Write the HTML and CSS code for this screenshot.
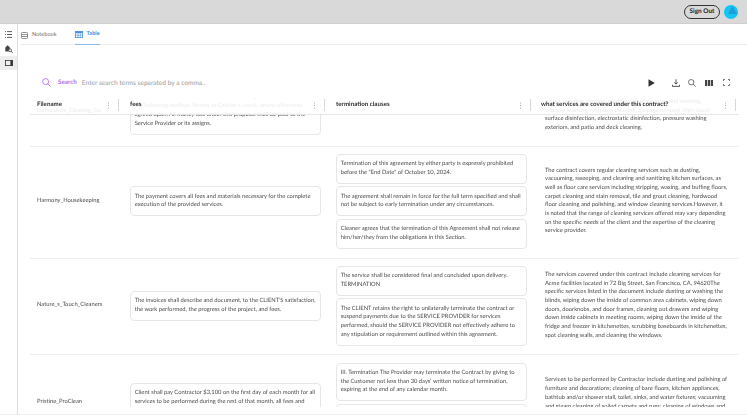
FILE: index.html
```html
<!DOCTYPE html>
<html lang="en">
<head>
    <meta charset="UTF-8">
    <title>Table</title>
    <link rel="stylesheet" href="styles.css">
</head>
<body>
    <header class="topbar">
        <button class="signout">Sign Out</button>
        <svg class="avatar" width="14" height="14" viewBox="0 0 14 14">
            <circle cx="7" cy="7" r="7" fill="#14c4f5"/>
            <path d="M8 1 L13.5 9 H4 Z" fill="#1a9fd6"/>
        </svg>
    </header>

    <div class="main">
        <aside class="sidebar">
            <a class="side-btn">
                <svg width="7" height="7" viewBox="0 0 7 7" fill="none" stroke="#333" stroke-width="0.8">
                    <path d="M2 0.6 H7 M2 3.5 H7 M2 6.4 H7"/>
                    <path d="M0 0.6 H1 M0 3.5 H1 M0 6.4 H1"/>
                </svg>
            </a>
            <a class="side-btn">
                <svg width="8" height="8" viewBox="0 0 8 8">
                    <path d="M0.3 2.5 L2.6 0.3 L4.9 2.5 V6.5 H0.3 Z" fill="#444"/>
                    <circle cx="5.1" cy="5.2" r="1.4" fill="#fff" stroke="#444" stroke-width="0.8"/>
                    <path d="M6.1 6.3 L7.7 7.8" stroke="#444" stroke-width="0.9"/>
                </svg>
            </a>
            <a class="side-btn active">
                <svg width="8" height="6" viewBox="0 0 8 6">
                    <rect x="0.4" y="0.4" width="7.2" height="5.2" fill="none" stroke="#333" stroke-width="0.8"/>
                    <rect x="5.4" y="0.4" width="2.2" height="5.2" fill="#333"/>
                </svg>
            </a>
        </aside>

        <div class="content">
            <nav class="tabs">
                <a class="tab">
                    <svg width="7" height="7" viewBox="0 0 7 7" fill="none" stroke="#777" stroke-width="0.8">
                        <rect x="0.5" y="0.5" width="6" height="6" rx="0.8"/>
                        <path d="M0.5 2.6 H6.5 M0.5 4.5 H6.5"/>
                    </svg>
                    Notebook
                </a>
                <a class="tab active">
                    <svg width="8" height="7" viewBox="0 0 8 7">
                        <rect x="0.4" y="0.4" width="7.2" height="6.2" fill="none" stroke="#4a8ee8" stroke-width="0.8"/>
                        <rect x="0.4" y="0.4" width="7.2" height="1.8" fill="#4a8ee8"/>
                        <path d="M3 2 V6.6 M5.3 2 V6.6 M0.4 4.3 H7.6" stroke="#4a8ee8" stroke-width="0.6"/>
                    </svg>
                    Table
                </a>
            </nav>

            <div class="search-row">
                <svg class="search-icon" width="9" height="9" viewBox="0 0 9 9" fill="none" stroke="#b26ee8" stroke-width="0.9">
                    <circle cx="3.6" cy="3.6" r="3"/>
                    <path d="M5.8 5.8 L8.6 8.6"/>
                </svg>
                <span class="search-label">Search</span>
                <span class="search-hint">Enter search terms separated by a comma..</span>
                <div class="tools">
                    <svg class="tool-play" width="7" height="8" viewBox="0 0 7 8"><path d="M0.5 0.3 L6.8 4 L0.5 7.7 Z" fill="#333"/></svg>
                    <svg class="tool-dl" width="8" height="8" viewBox="0 0 8 8" fill="none" stroke="#444" stroke-width="0.9">
                        <path d="M4 0.3 V5 M2.4 3.4 L4 5.2 L5.6 3.4"/>
                        <path d="M0.5 5.8 V7.4 H7.5 V5.8"/>
                    </svg>
                    <svg class="tool-find" width="8" height="8" viewBox="0 0 8 8" fill="none" stroke="#555" stroke-width="0.8">
                        <circle cx="3.2" cy="3.2" r="2.7"/>
                        <path d="M5.1 5.1 L7.7 7.7"/>
                    </svg>
                    <svg class="tool-cols" width="8" height="6" viewBox="0 0 8 6">
                        <path d="M0 0 H2.2 V6 H0 Z M2.9 0 H5.1 V6 H2.9 Z M5.8 0 H8 V6 H5.8 Z" fill="#444"/>
                    </svg>
                    <svg class="tool-full" width="7" height="7" viewBox="0 0 7 7" fill="none" stroke="#444" stroke-width="0.8">
                        <path d="M0.4 2 V0.4 H2 M5 0.4 H6.6 V2 M6.6 5 V6.6 H5 M2 6.6 H0.4 V5"/>
                    </svg>
                </div>
            </div>

            <div class="table">
                <div class="thead">
                    <div class="th th-name"><span>Filename</span><i class="dots"></i></div>
                    <div class="th"><span>fees</span><i class="dots"></i></div>
                    <div class="th"><span>termination clauses</span><i class="dots"></i></div>
                    <div class="th th-what"><span>what services are covered under this contract?</span><i class="dots"></i></div>
                </div>

                <div class="tbody">
                    <div class="row row-first">
                        <div class="cell cell-name">Immaculate_Cleaning_Co</div>
                        <div class="cell cell-fees">
                            <div class="card">Base rate: $1,300 Overtime rate: $50 / hour Payments are to be made in the following method: Venmo or Cashier's check, unless otherwise agreed upon. All money due under this proposal shall be paid to the Service Provider or its assigns.</div>
                        </div>
                        <div class="cell"></div>
                        <div class="cell cell-what">The contract covers general cleaning of all rooms and common areas, carpet cleaning, dusting, mopping, floor cleaning and washing,<br>window washing, restroom cleaning, garbage removal, high-touch<br>surface disinfection, electrostatic disinfection, pressure washing<br>exteriors, and patio and deck cleaning.</div>
                    </div>

                    <div class="row">
                        <div class="cell cell-name">Harmony_Housekeeping</div>
                        <div class="cell cell-fees">
                            <div class="card">The payment covers all fees and materials necessary for the complete execution of the provided services.</div>
                        </div>
                        <div class="cell">
                            <div class="card">Termination of this agreement by either party is expressly prohibited before the "End Date" of October 10, 2024.</div>
                            <div class="card">The agreement shall remain in force for the full term specified and shall not be subject to early termination under any circumstances.</div>
                            <div class="card">Cleaner agrees that the termination of this Agreement shall not release him/her/they from the obligations in this Section.</div>
                        </div>
                        <div class="cell cell-what">The contract covers regular cleaning services such as dusting, vacuuming, sweeping, and cleaning and sanitizing kitchen surfaces, as well as floor care services including stripping, waxing, and buffing floors, carpet cleaning and stain removal, tile and grout cleaning, hardwood<br>floor cleaning and polishing, and window cleaning services.However, it<br>is noted that the range of cleaning services offered may vary depending<br>on the specific needs of the client and the expertise of the cleaning<br>service provider.</div>
                    </div>

                    <div class="row">
                        <div class="cell cell-name">Nature_s_Touch_Cleaners</div>
                        <div class="cell cell-fees">
                            <div class="card">The invoices shall describe and document, to the CLIENT'S satisfaction, the work performed, the progress of the project, and fees.</div>
                        </div>
                        <div class="cell">
                            <div class="card">The service shall be considered final and concluded upon delivery. TERMINATION</div>
                            <div class="card">The CLIENT retains the right to unilaterally terminate the contract or suspend payments due to the SERVICE PROVIDER for services performed, should the SERVICE PROVIDER not effectively adhere to any stipulation or requirement outlined within this agreement.</div>
                        </div>
                        <div class="cell cell-what">The services covered under this contract include cleaning services for Acme facilities located in 72 Big Street, San Francisco, CA, 94620The specific services listed in the document include dusting or washing the blinds, wiping down the inside of common area cabinets, wiping down doors, doorknobs, and door frames, cleaning out drawers and wiping down inside cabinets in meeting rooms, wiping down the inside of the fridge and freezer in kitchenettes, scrubbing baseboards in kitchenettes, spot cleaning walls, and cleaning the windows.</div>
                    </div>

                    <div class="row">
                        <div class="cell cell-name">Pristine_ProClean</div>
                        <div class="cell cell-fees">
                            <div class="card">Client shall pay Contractor $3,100 on the first day of each month for all services to be performed during the rest of that month, all fees and expenses included in that sum.</div>
                        </div>
                        <div class="cell">
                            <div class="card">III. Termination The Provider may terminate the Contract by giving to the Customer not less than 30 days' written notice of termination, expiring at the end of any calendar month.</div>
                            <div class="card">Either party may terminate this Contract upon written notice if the other party fails to perform any of its obligations under this Contract and does not remedy that failure within ten days of that notice.</div>
                        </div>
                        <div class="cell cell-what">Services to be performed by Contractor include dusting and polishing of furniture and decorations; cleaning of bare floors, kitchen appliances, bathtub and/or shower stall, toilet, sinks, and water fixtures; vacuuming and steam cleaning of soiled carpets and rugs; cleaning of windows and mirrors; and removal of trash from all rooms of the premises at each and every visit made by the Contractor.</div>
                    </div>
                </div>
            </div>
            <div class="foot"></div>
        </div>
    </div>
</body>
</html>
```

FILE: styles.css
```css
* {
    box-sizing: border-box;
}

html, body {
    height: 100%;
}

body {
    margin: 0;
    overflow: hidden;
    background-color: #fff;
    color: #4b4b4b;
    font-family: Lato, sans-serif;
    font-size: 5.8px;
    line-height: 8.7px;
    text-rendering: geometricPrecision;
}

.topbar {
    height: 24px;
    display: flex;
    align-items: center;
    justify-content: flex-end;
    gap: 4px;
    padding-right: 9px;
    background-color: #d9d9d9;
    border-bottom: 1px solid #cfcfcf;
}

.signout {
    width: 36px;
    height: 14px;
    padding: 0;
    border: 1px solid #333;
    border-radius: 7px;
    background: transparent;
    color: #222;
    font-family: inherit;
    font-size: 6.4px;
    font-weight: 700;
    text-rendering: geometricPrecision;
}

.main {
    height: 391px;
    display: flex;
}

.sidebar {
    width: 18px;
    flex-shrink: 0;
    padding-top: 2px;
    border-right: 1px solid #dedede;
}

.side-btn {
    height: 11px;
    margin-top: 3px;
    display: flex;
    align-items: center;
    padding-left: 5px;
}

.side-btn.active {
    height: 14px;
    margin-top: 2px;
    background-color: #eeeeee;
}

.content {
    flex: 1;
    min-width: 0;
    display: flex;
    flex-direction: column;
}

.tabs {
    height: 21px;
    flex-shrink: 0;
    margin-left: 3px;
    display: flex;
    gap: 18px;
    border-bottom: 1.5px solid #ececec;
}

.tab {
    height: 21px;
    padding-top: 1px;
    display: flex;
    align-items: center;
    gap: 4px;
    color: #6e6e6e;
    font-size: 5.6px;
}

.tab.active {
    color: #3f87e6;
    font-weight: 700;
    border-bottom: 1.5px solid #8db8f0;
}

.search-row {
    height: 53px;
    flex-shrink: 0;
    display: flex;
    align-items: center;
    padding: 22px 0 0 24px;
}

.search-label {
    margin: 1px 0 0 7px;
    color: #b26ee8;
    font-size: 6.3px;
    font-weight: 700;
}

.search-hint {
    margin: 1px 0 0 5px;
    color: #9a9a9a;
    font-size: 6.6px;
}

.tools {
    margin-left: auto;
    margin-right: 17px;
    display: flex;
    align-items: center;
}

.tool-dl {
    margin-left: 17px;
}

.tool-find {
    margin-left: 8px;
}

.tool-cols {
    margin-left: 9px;
}

.tool-full {
    margin-left: 10px;
}

.table {
    position: relative;
    flex: 1;
    min-height: 0;
    overflow: hidden;
    margin-left: 12px;
    width: 709px;
    will-change: transform;
}

.thead {
    position: absolute;
    top: 0;
    left: 0;
    right: 0;
    z-index: 1;
    height: 17px;
    display: grid;
    grid-template-columns: 88px 206px 206px 209px;
    background-color: rgba(255, 255, 255, 0.88);
    border-bottom: 1px solid #e6e6e6;
    color: #2c2c2c;
    font-size: 6.2px;
    font-weight: 700;
}

.th {
    display: flex;
    align-items: center;
    justify-content: space-between;
    height: 12px;
    margin-top: 1px;
    padding: 0 9px 0 11px;
    border-left: 1px solid #d8d8d8;
}

.th-name {
    padding-left: 7px;
    border-left: 0;
}

.th-what {
    width: 206px;
    padding-left: 10px;
    border-right: 1px solid #d8d8d8;
}

.dots {
    width: 1px;
    height: 1px;
    background-color: #aaa;
    box-shadow: 0 -2.5px 0 #aaa, 0 2.5px 0 #aaa;
}

.tbody {
    margin-top: -18px;
}

.row {
    display: grid;
    grid-template-columns: 88px 206px 206px 209px;
    padding: 7.2px 0 8.6px;
    align-items: center;
    border-bottom: 1px solid #eeeeee;
}

.row-first {
    padding-bottom: 11px;
}

.cell {
    display: flex;
    flex-direction: column;
    gap: 2.6px;
    padding: 0 3px 0 12px;
}

.cell-name {
    padding: 0 0 0 7px;
}

.cell-what {
    padding: 0 9px 0 15px;
    display: block;
}

.card {
    padding: 5.3px 5px 5.3px 3.7px;
    border: 1px solid #e6e6e6;
    border-radius: 4px;
    background-color: #fff;
}

.cell-fees .card {
    padding-right: 1px;
}

.foot {
    height: 8px;
    flex-shrink: 0;
    border-bottom: 1px solid #eeeeee;
    margin-left: -18px;
}
```
